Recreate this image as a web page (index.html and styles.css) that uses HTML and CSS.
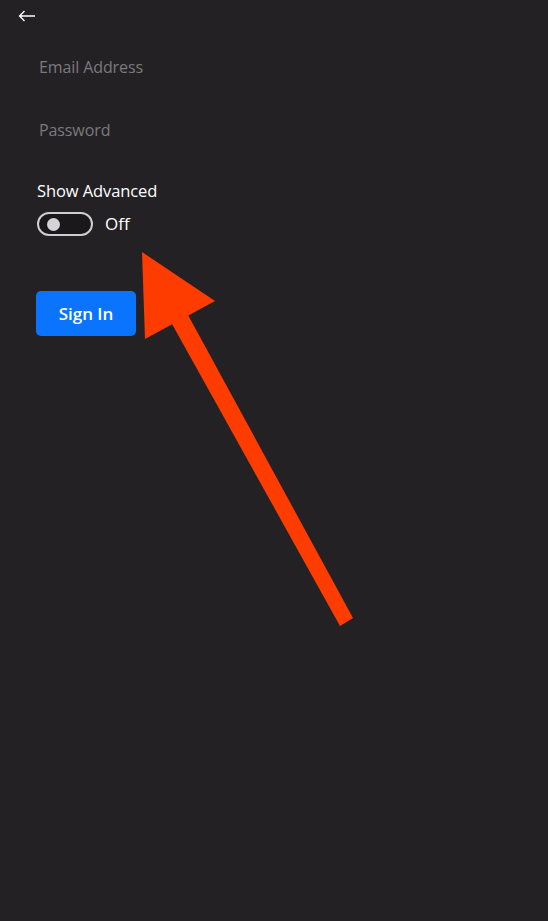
FILE: index.html
```html
<!DOCTYPE html>
<html>
<head>
<meta charset="utf-8">
<link rel="stylesheet" href="styles.css">
</head>
<body>
<div class="page">
  <div class="topbar">
    <button class="back" aria-label="Back">
      <svg width="18" height="12" viewBox="0 0 18 12"><path d="M17 6H1.5M6.5 1L1.5 6l5 5" fill="none" stroke="#fff" stroke-width="1.3"/></svg>
    </button>
  </div>
  <form class="form">
    <div class="field">Email Address</div>
    <div class="field">Password</div>
    <div class="advanced">
      <div class="label">Show Advanced</div>
      <div class="toggle-row">
        <span class="toggle"><span class="knob"></span></span>
        <span class="state">Off</span>
      </div>
    </div>
    <button type="button" class="signin">Sign In</button>
  </form>
  <svg class="annot" width="548" height="921" viewBox="0 0 548 921">
    <polygon points="142,252 215,301 145,339" fill="#ff3c00"/>
    <polygon points="172,324 188,315 353,618 340,626" fill="#ff3c00"/>
  </svg>
</div>
</body>
</html>
```
FILE: styles.css
```css
html, body {
  margin: 0;
  padding: 0;
  background: #232124;
}
body {
  font-family: "Open Sans", "Noto Sans", sans-serif;
  color: #fff;
}
.page {
  position: relative;
  width: 548px;
  height: 921px;
  overflow: hidden;
}
.topbar {
  height: 32px;
  display: flex;
  align-items: center;
  padding-left: 18px;
}
.back {
  background: none;
  border: 0;
  padding: 0;
  margin-top: -1px;
  display: flex;
  cursor: pointer;
}
.form {
  display: flex;
  flex-direction: column;
  align-items: flex-start;
  padding-left: 37px;
}
.field {
  color: #7c7a7e;
  font-size: 16px;
  padding-left: 2px;
  height: 24px;
  line-height: 24px;
  margin-top: 23px;
  letter-spacing: -0.1px;
}
.field + .field {
  margin-top: 39px;
}
.advanced {
  margin-top: 38px;
}
.label {
  font-size: 16.5px;
  line-height: 22px;
  letter-spacing: -0.1px;
}
.toggle-row {
  display: flex;
  align-items: center;
  margin-top: 10px;
}
.toggle {
  box-sizing: border-box;
  width: 56px;
  height: 24px;
  border: 2px solid #cfcdd0;
  border-radius: 12px;
  background: #1a181b;
  display: flex;
  align-items: center;
  padding-left: 8px;
}
.knob {
  width: 13px;
  height: 13px;
  border-radius: 50%;
  background: #d6d3d8;
}
.state {
  margin-left: 12px;
  font-size: 17px;
  line-height: 24px;
}
.signin {
  margin-top: 55px;
  margin-left: -1px;
  width: 100px;
  height: 45px;
  border: 0;
  border-radius: 5px;
  background: #0a74ff;
  color: #fff;
  font-family: "Open Sans", sans-serif;
  font-weight: 600;
  font-size: 17px;
  padding: 0;
}
.annot {
  position: absolute;
  left: 0;
  top: 0;
  pointer-events: none;
}
```
